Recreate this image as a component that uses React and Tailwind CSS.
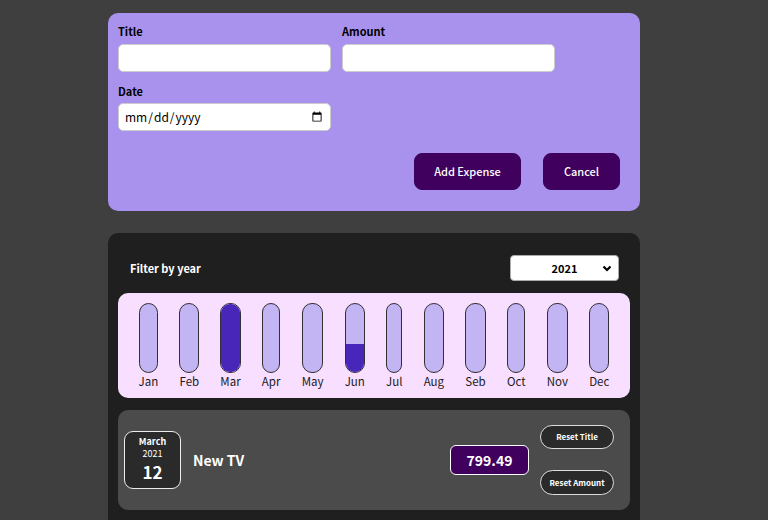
const months = [
  { label: 'Jan', fill: 0 },
  { label: 'Feb', fill: 0 },
  { label: 'Mar', fill: 100 },
  { label: 'Apr', fill: 0 },
  { label: 'May', fill: 0 },
  { label: 'Jun', fill: 41 },
  { label: 'Jul', fill: 0 },
  { label: 'Aug', fill: 0 },
  { label: 'Seb', fill: 0 },
  { label: 'Oct', fill: 0 },
  { label: 'Nov', fill: 0 },
  { label: 'Dec', fill: 0 },
]

function ChartBar({ label, fill }) {
  return (
    <div className="flex h-full flex-col items-center">
      <div className="flex h-[70px] w-full shrink-0 flex-col justify-end overflow-hidden rounded-[10px] border border-[#313131] bg-[#c3b4f3]">
        <div className="w-full bg-[#4826b9]" style={{ height: `${fill}%` }} />
      </div>
      <div className="pt-[2px] text-[11.5px] leading-[13px] text-[#1a1a1a]">{label}</div>
    </div>
  )
}

function App() {
  return (
    <div
      className="min-h-[520px] bg-[#3f3f3f] pt-[13px]"
      style={{ fontFamily: '"Noto Sans CJK JP", "Noto Sans", sans-serif' }}
    >
      <div className="ml-[108px] w-[532px] rounded-[10px] bg-[#a892ee] px-[10px] pt-[10px] pb-[21px]">
        <div className="flex flex-wrap gap-x-[11px] gap-y-[11px]">
          <div>
            <label className="mb-[5px] block text-[11px] font-bold leading-[16px] text-black">Title</label>
            <input type="text" className="h-[28px] w-[213px] rounded-[5px] border border-[#ccc] bg-white px-2 text-[12px] outline-none" />
          </div>
          <div>
            <label className="mb-[5px] block text-[11px] font-bold leading-[16px] text-black">Amount</label>
            <input type="number" className="h-[28px] w-[213px] rounded-[5px] border border-[#ccc] bg-white px-2 text-[12px] outline-none" />
          </div>
          <div>
            <label className="mb-[4px] block text-[11px] font-bold leading-[16px] text-black">Date</label>
            <input type="date" className="h-[28px] w-[213px] rounded-[5px] border border-[#ccc] bg-white px-[5px] text-[12px] text-black outline-none" />
          </div>
        </div>
        <div className="mt-[22px] flex justify-end gap-[22px] pr-[10px]">
          <button className="h-[37px] w-[107px] rounded-[8px] border border-[#40005d] bg-[#40005d] text-[11px] font-medium text-white">
            Add Expense
          </button>
          <button className="h-[37px] w-[77px] rounded-[8px] border border-[#40005d] bg-[#40005d] text-[11px] font-medium text-white">
            Cancel
          </button>
        </div>
      </div>

      <div className="ml-[108px] mt-[22px] w-[532px] rounded-t-[10px] bg-[#1f1f1f] p-[10px] pb-[20px]">
        <div className="mt-[12px] mb-[12px] flex items-center justify-between pl-[12px] pr-[11px]">
          <span className="text-[11px] font-bold text-white">Filter by year</span>
          <div className="relative flex h-[26px] w-[109px] items-center justify-center rounded-[4px] border border-[#aaa] bg-white">
            <span className="text-[11px] font-bold text-black">2021</span>
            <svg className="absolute right-[6px] top-[9px]" width="10" height="8" viewBox="0 0 10 8">
              <path d="M1.5 1.5 L5 5 L8.5 1.5" fill="none" stroke="#000" strokeWidth="2.2" />
            </svg>
          </div>
        </div>

        <div className="flex h-[105px] justify-around rounded-[10px] bg-[#f8dfff] p-[10px]">
          {months.map((m) => (
            <ChartBar key={m.label} label={m.label} fill={m.fill} />
          ))}
        </div>

        <div className="mt-[12px] flex h-[100px] items-center rounded-[10px] bg-[#4b4b4b] pl-[6px] pr-[16px]">
          <div className="flex h-[58px] w-[57px] flex-col items-center rounded-[9px] border border-[#ececec] bg-[#2a2a2a] pt-[4px] text-white">
            <div className="text-[9px] font-bold leading-[12px]">March</div>
            <div className="text-[9px] leading-[12px]">2021</div>
            <div className="mt-[3px] text-[17px] font-bold leading-[17px]">12</div>
          </div>
          <h2 className="ml-[12px] flex-1 text-[14px] font-bold text-white">New TV</h2>
          <div className="flex h-[30px] w-[79px] items-center justify-center rounded-[6px] border border-white bg-[#40005d] text-[14px] font-bold text-white">
            799.49
          </div>
          <div className="ml-[11px] flex flex-col gap-[21px]">
            <button className="h-[24px] w-[74px] rounded-full border border-[#ddd] bg-[#2a2a2a] text-[8px] font-bold text-white">
              Reset Title
            </button>
            <button className="h-[25px] w-[74px] rounded-full border border-[#ddd] bg-[#2a2a2a] text-[8px] font-bold text-white">
              Reset Amount
            </button>
          </div>
        </div>
      </div>
    </div>
  )
}

export default App
